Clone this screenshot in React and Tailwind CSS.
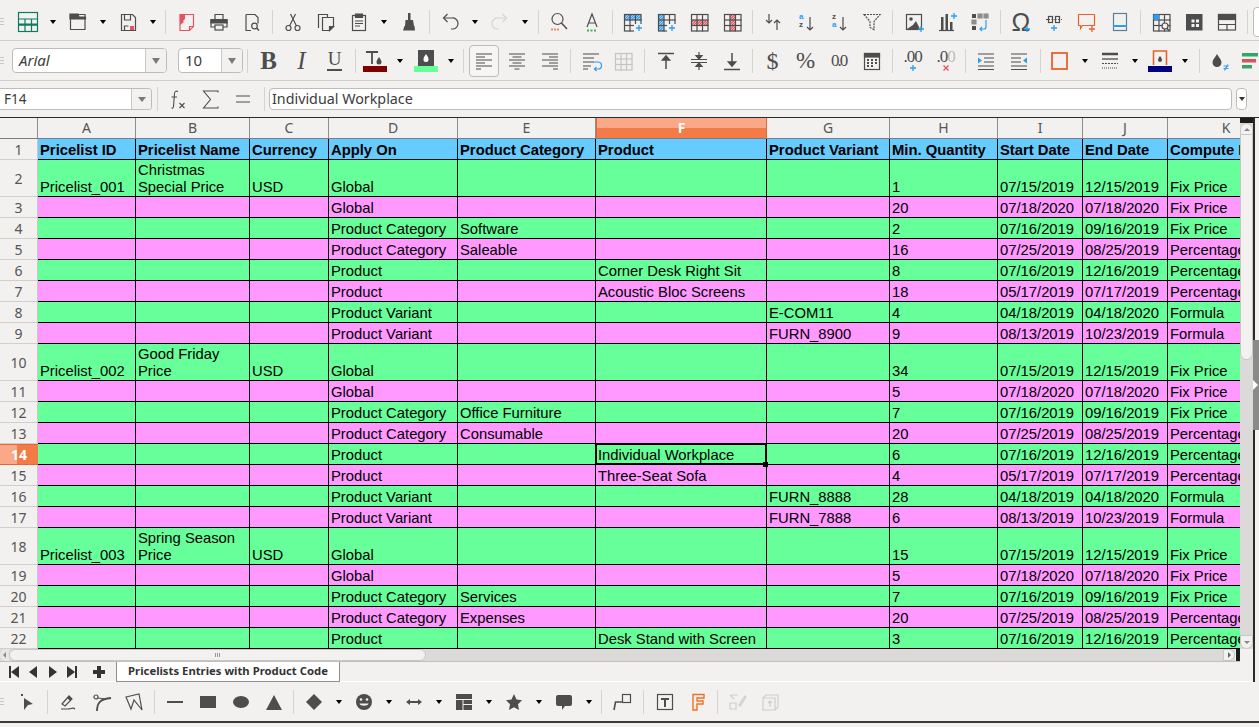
const D = '#4d4d4d';
const BLUE = '#2a9df4';
const RED = '#e2555f';
const ORANGE = '#e8622a';

const Ic = ({ children }) => (
  <svg width="22" height="22" viewBox="0 0 22 22" fill="none" stroke={D} strokeWidth="1.2">
    {children}
  </svg>
);

const I = ({ children, w = 'w-[33px]' }) => (
  <div className={`${w} h-[24px] flex items-center justify-center shrink-0`}>{children}</div>
);
const A = ({ cls = '' }) => (
  <div className={`w-[17px] flex items-center justify-center shrink-0 ${cls}`}>
    <div className="w-0 h-0 border-x-[3.5px] border-x-transparent border-t-[4px] border-t-black" />
  </div>
);
const S = ({ w = 'w-[8.3px]' }) => (
  <div className={`${w} h-[24px] flex justify-center shrink-0`}>
    <div className="w-px h-full bg-[#d4d3d0]" />
  </div>
);
const Grip = ({ w = 'w-[11px]' }) => (
  <div className={`${w} shrink-0 flex flex-col gap-[2px] pl-0`}>
    <div className="w-[4px] h-px bg-[#c8c7c4]" />
    <div className="w-[4px] h-px bg-[#c8c7c4]" />
    <div className="w-[4px] h-px bg-[#c8c7c4]" />
  </div>
);

const Grid = ({ x = 2, y = 3, n = 3, m = 3, s = 5.5, c = D }) => (
  <g stroke={c}>
    <rect x={x + 0.5} y={y + 0.5} width={n * s} height={m * s} />
    {Array.from({ length: n - 1 }, (_, i) => (
      <path key={i} d={`M${x + 0.5 + (i + 1) * s} ${y}v${m * s + 1}`} />
    ))}
    {Array.from({ length: m - 1 }, (_, i) => (
      <path key={i} d={`M${x} ${y + 0.5 + (i + 1) * s}h${n * s + 1}`} />
    ))}
  </g>
);
const Plus = ({ x = 17, y = 17, c = BLUE }) => (
  <path d={`M${x - 3} ${y}h6M${x} ${y - 3}v6`} stroke={c} strokeWidth="1.3" />
);
// hatched band used by the row and column icons
const Hatch = ({ x, y, w, h, c }) => {
  const lines = [];
  for (let i = 0; i < w + h; i += 2.5) {
    lines.push(`M${x + Math.min(i, w)} ${y + Math.max(0, i - w)}L${x + Math.max(0, i - h)} ${y + Math.min(i, h)}`);
  }
  return (
    <g>
      <rect x={x} y={y} width={w} height={h} fill="#fff" stroke="none" />
      <path d={lines.join('')} stroke={c} strokeWidth="1.2" />
    </g>
  );
};

const icons = {
  table: (
    <Ic>
      <g stroke="#0e7a5f">
        <rect x="1.5" y="1.5" width="19" height="19" />
        <path d="M1 8h20M1 14h20M8 8v13M14.500 8v13" />
        <path d="M1 13.500h20" strokeWidth="2" />
      </g>
    </Ic>
  ),
  open: (
    <Ic>
      <path d="M3.500 3.500h14.500v15h-14.500z" />
      <path d="M3 3h8l1 3h6.500v2h-15.500z" fill={D} />
    </Ic>
  ),
  save: (
    <Ic>
      <path d="M4.500 3.500h11l3 3v13h-14z" />
      <path d="M7.500 4v5h6v-5M7.500 19v-4h4" />
      <rect x="13" y="15" width="4" height="4" fill={RED} stroke="none" />
    </Ic>
  ),
  pdf: (
    <Ic>
      <path d="M5 3.500h13.500v12l-4 4h-9.500zM14.500 19.500v-4h4" stroke={RED} />
      <path d="M5 3h5v5l-2 2 1 1-4 3z" fill={RED} stroke="none" />
    </Ic>
  ),
  print: (
    <Ic>
      <path d="M7 8v-4.500h8v4.500M7 16h-4v-7.500h16v7.500h-4" />
      <path d="M3 9h16v3h-16z" fill={D} />
      <rect x="7" y="14" width="8" height="5" />
    </Ic>
  ),
  preview: (
    <Ic>
      <path d="M5 3.500h9l3 3v6M10 19.500h-5v-16" />
      <circle cx="13.500" cy="15" r="2.800" stroke={D} />
      <path d="M15.500 17l2.500 2.500" strokeWidth="1.600" />
    </Ic>
  ),
  cut: (
    <Ic>
      <circle cx="6.500" cy="17" r="2.500" />
      <circle cx="15.500" cy="17" r="2.500" />
      <path d="M7.500 15l6-12M14.500 15l-6-12" />
    </Ic>
  ),
  copy: (
    <Ic>
      <path d="M4 16.500h-.500v-13h9v2.500" />
      <path d="M7.500 6.500h11v9l-4 4h-7z" />
      <path d="M14.500 19.500v-4h4z" fill={D} />
    </Ic>
  ),
  paste: (
    <Ic>
      <rect x="4.500" y="4.500" width="13" height="15" />
      <path d="M7.500 3h7v3.500h-7z" fill={D} />
      <path d="M7 10h8M7 12.500h8M7 15h5" />
    </Ic>
  ),
  clone: (
    <Ic>
      <path d="M10 2h2.500v7h-2.500z" fill={D} stroke="none" />
      <path d="M7.500 9h7.500l1 6h-9z" fill={D} stroke="none" />
      <path d="M6.500 15h10l.5 4.500h-12z" fill={D} stroke="none" />
    </Ic>
  ),
  undo: (
    <Ic>
      <path d="M5 7h8a5.500 5.500 0 0 1 1 11h-2" />
      <path d="M8.500 3l-4 4 4 4" />
    </Ic>
  ),
  redo: (
    <Ic>
      <g stroke="#d5d4d1">
        <path d="M17 7h-8a5.500 5.500 0 0 0-1 11h2" />
        <path d="M13.500 3l4 4-4 4" />
      </g>
    </Ic>
  ),
  find: (
    <Ic>
      <circle cx="9.500" cy="8" r="5.500" />
      <path d="M13.500 12l5.500 6" strokeWidth="1.500" />
      <path d="M3 18.500h8" stroke="#ec8a66" strokeWidth="2" strokeDasharray="2 1" />
    </Ic>
  ),
  spell: (
    <Ic>
      <path d="M6 16l5-13 5 13M7.500 12h7" />
      <path d="M6 19.500h10" stroke="#3fb45c" strokeWidth="2" strokeDasharray="2 1.500" />
    </Ic>
  ),
  row: (
    <Ic>
      <Hatch x={2.5} y={3.5} w={16.5} h={5.5} c={BLUE} />
      <Grid x={2} y={3} n={3} m={3} />
      <rect x="12" y="13" width="10" height="9" fill="#f2f1f0" stroke="none" />
      <Plus />
    </Ic>
  ),
  col: (
    <Ic>
      <Hatch x={3.5} y={3.5} w={5.5} h={16.5} c={BLUE} />
      <Grid x={3} y={3} n={3} m={3} />
      <rect x="12" y="13" width="10" height="9" fill="#f2f1f0" stroke="none" />
      <Plus />
    </Ic>
  ),
  delRow: (
    <Ic>
      <Hatch x={3.5} y={9} w={16.5} h={5.5} c={RED} />
      <Grid x={3} y={3} n={3} m={3} />
    </Ic>
  ),
  delCol: (
    <Ic>
      <Hatch x={9} y={3.5} w={5.5} h={16.5} c={RED} />
      <Grid x={3} y={3} n={3} m={3} />
    </Ic>
  ),
  sort: (
    <Ic>
      <path d="M7 3v9M4 9l3 3 3-3M15 19v-10M12 12l3-3 3 3" />
    </Ic>
  ),
  sortAz: (
    <Ic>
      <text x="4" y="8" fontSize="8" fontFamily="Liberation Sans" fontWeight="700" fill={BLUE} stroke="none">a</text>
      <text x="4" y="16" fontSize="8" fontFamily="Liberation Sans" fontWeight="700" fill={D} stroke="none">z</text>
      <path d="M15 6v13M12 16l3 3 3-3" />
    </Ic>
  ),
  sortZa: (
    <Ic>
      <text x="4" y="8" fontSize="8" fontFamily="Liberation Sans" fontWeight="700" fill={D} stroke="none">z</text>
      <text x="4" y="16" fontSize="8" fontFamily="Liberation Sans" fontWeight="700" fill={BLUE} stroke="none">a</text>
      <path d="M15 6v13M12 16l3 3 3-3" />
    </Ic>
  ),
  filter: (
    <Ic>
      <path d="M3 3.500h16l-6 7v8l-4-2v-6z" strokeDasharray="2 1" />
    </Ic>
  ),
  image: (
    <Ic>
      <rect x="3.500" y="3.500" width="15" height="15" />
      <circle cx="8" cy="8" r="1.800" fill={D} stroke="none" />
      <path d="M4 18l6-4 3-4 4 8z" fill={D} stroke="none" />
      <Plus x={18} y={18} />
    </Ic>
  ),
  chart: (
    <Ic>
      <path d="M3 19.500h15" />
      <path d="M5 6h2.500v13h-2.500zM9.500 3h2.500v16h-2.500zM14 11h2.500v8h-2.500z" fill={D} stroke="none" />
      <Plus x={18} y={5} />
    </Ic>
  ),
  pivot: (
    <Ic>
      <path d="M3 3h4v4h-4zM3 15h4v4h-4z" fill={D} stroke="none" />
      <path d="M9 3h4v4h-4zM15 3h4v4h-4zM3 9h4v4h-4z" stroke={D} fill={D} opacity=".6" />
      <path d="M17 9v7a2 2 0 0 1-2 2h-4M13 16l-2 2 2 2" stroke={BLUE} />
    </Ic>
  ),
  link: (
    <Ic>
      <path d="M3 8.500h4M15 8.500h4M8.500 8.500h5" strokeDasharray="2 1" />
      <rect x="5.500" y="5.500" width="4" height="6" />
      <rect x="12.500" y="5.500" width="4" height="6" />
      <Plus x={11} y={17} />
    </Ic>
  ),
  comment: (
    <Ic>
      <path d="M2.500 3.500h16v11h-12l-2 3v-3h-2z" stroke={ORANGE} />
      <Plus x={16} y={18} c={ORANGE} />
    </Ic>
  ),
  header: (
    <Ic>
      <rect x="4.500" y="2.500" width="13" height="17" stroke="#5f7e91" />
      <path d="M4 15h14" stroke={BLUE} strokeWidth="2" />
    </Ic>
  ),
  rangeFind: (
    <Ic>
      <Grid x={3} y={3} n={3} m={3} />
      <rect x="3.500" y="3.500" width="5.500" height="5.500" fill={BLUE} stroke="none" />
      <circle cx="15" cy="15" r="3" fill="#f2f1f0" />
      <path d="M17 17.500l2.500 2.500" strokeWidth="1.500" />
    </Ic>
  ),
  tableDark: (
    <Ic>
      <rect x="3" y="3" width="16.500" height="16.500" fill={D} stroke="none" />
      <path d="M8.500 8.500h3v3h-3zM13 8.500h3v3h-3zM8.500 13h3v3h-3zM13 13h3v3h-3z" fill="#f2f1f0" stroke="none" />
    </Ic>
  ),
  tableSplit: (
    <Ic>
      <rect x="2.500" y="3.500" width="17" height="15.500" />
      <rect x="2.500" y="3.500" width="17" height="5" fill={D} />
      <path d="M2 13.500h18M11 13.500v6" />
    </Ic>
  ),
  alignL: (
    <Ic>
      <path d="M3 4h16M3 7h9M3 10h16M3 13h9M3 16h16M3 19h5" />
    </Ic>
  ),
  alignC: (
    <Ic>
      <path d="M3 4h16M6.500 7h9M3 10h16M6.500 13h9M3 16h16M8.500 19h5" />
    </Ic>
  ),
  alignR: (
    <Ic>
      <path d="M3 4h16M10 7h9M3 10h16M10 13h9M3 16h16M14 19h5" />
    </Ic>
  ),
  wrap: (
    <Ic>
      <path d="M3 4h16M3 8h11M3 12h11M3 16h8M3 19h5" />
      <path d="M14 12h4a2 2 0 0 1 0 7h-3M16.500 17l-2 2 2 2" stroke={BLUE} />
    </Ic>
  ),
  merge: (
    <Ic>
      <Grid x={2} y={3} n={3} m={3} c="#c5c4c1" />
    </Ic>
  ),
  top: (
    <Ic>
      <path d="M3 3.500h16" strokeWidth="1.500" />
      <path d="M11 19v-12M7.500 10l3.500-4 3.500 4z" fill={D} strokeWidth="1.500" />
    </Ic>
  ),
  mid: (
    <Ic>
      <path d="M3 9.500h16M3 12.500h16" />
      <path d="M11 2v7M8 5.500l3 3.500 3-3.500zM11 20v-7M8 16.500l3-3.500 3 3.500z" fill={D} />
    </Ic>
  ),
  bottom: (
    <Ic>
      <path d="M3 19.500h16" strokeWidth="1.500" />
      <path d="M11 3v12M7.500 12l3.500 4 3.500-4z" fill={D} strokeWidth="1.500" />
    </Ic>
  ),
  cal: (
    <Ic>
      <rect x="3.500" y="3.500" width="15" height="16" />
      <rect x="3.500" y="3.500" width="15" height="3.500" fill={D} />
      <path d="M6 10h2M10 10h2M14 10h2M6 13h2M10 13h2M14 13h2M6 16h2M10 16h2" strokeWidth="1.800" />
    </Ic>
  ),
  indent: (
    <Ic>
      <path d="M3 4h16M9 8h10M9 12h10M3 16h16M3 19.500h16" />
      <path d="M3 7.500l4 3-4 3z" fill={BLUE} stroke="none" />
    </Ic>
  ),
  outdent: (
    <Ic>
      <path d="M3 4h16M3 8h10M3 12h10M3 16h16M3 19.500h16" />
      <path d="M19 7.500l-4 3 4 3z" fill={BLUE} stroke="none" />
    </Ic>
  ),
  border: (
    <Ic>
      <rect x="3" y="3" width="15" height="16" stroke={ORANGE} strokeWidth="1.800" />
    </Ic>
  ),
  borderStyle: (
    <Ic>
      <path d="M3 4h16" strokeWidth="2.500" />
      <path d="M3 9h16" strokeWidth="1.300" />
      <path d="M3 13.500h16" strokeDasharray="2 1" />
      <path d="M3 18h16" strokeDasharray="1 1" />
    </Ic>
  ),
  cond: (
    <Ic>
      <path d="M8 4c2 3.500 4.500 5.500 4.500 8.500a4.500 4.500 0 0 1-9 0c0-3 2.500-5 4.500-8.500z" fill={D} stroke="none" />
      <path d="M14.500 16h5M14.500 18.500h5M19 14.500l-3.500 6" stroke={BLUE} />
    </Ic>
  ),
};

const Omega = () => (
  <div className="relative w-[22px] h-[22px]">
    <span className="block text-center text-[25px] leading-[22px] text-[#4d4d4d] font-['Liberation_Sans',sans-serif]">Ω</span>
    <svg className="absolute left-[12px] top-[12px]" width="10" height="10" viewBox="0 0 10 10">
      <path d="M2 6h6M5 3v6" stroke={BLUE} strokeWidth="1.300" />
    </svg>
  </div>
);

const Big = ({ children, cls = '' }) => (
  <span className={`text-[#4d4d4d] font-['Liberation_Serif',serif] ${cls}`}>{children}</span>
);

const ColorBtn = ({ bar, letter }) => (
  <div className="w-[24px] flex flex-col items-center">
    {letter ? (
      <svg width="24" height="16" viewBox="0 0 24 16">
        <path d="M3 2h12M9 2v12" stroke={D} strokeWidth="1.800" />
        <path d="M16 7c1 2 2.500 3 2.500 5a2.500 2.500 0 0 1-5 0c0-2 1.500-3 2.500-5z" fill={D} />
      </svg>
    ) : (
      <svg width="24" height="16" viewBox="0 0 24 16">
        <rect x="4" y="0" width="16" height="16" fill={D} />
        <path d="M12 4c1 2 2.500 3 2.500 5.500a2.500 2.500 0 0 1-5 0c0-2.500 1.500-3.500 2.500-5.500z" fill="#fff" />
      </svg>
    )}
    <div className={`w-[24px] h-[6px] ${bar}`} />
  </div>
);

const Toolbar1 = () => (
  <div className="h-[41px] flex items-center border-b border-[#cfcecb] pt-[3px] overflow-hidden">
    <Grip />
    <I>{icons.table}</I><A />
    <I>{icons.open}</I><A />
    <I>{icons.save}</I><A />
    <S />
    <I>{icons.pdf}</I><I>{icons.print}</I><I>{icons.preview}</I>
    <S />
    <I>{icons.cut}</I><I>{icons.copy}</I><I>{icons.paste}</I><A />
    <I>{icons.clone}</I>
    <S />
    <I>{icons.undo}</I><A />
    <I>{icons.redo}</I><A />
    <S />
    <I>{icons.find}</I><I>{icons.spell}</I>
    <S />
    <I>{icons.row}</I><I>{icons.col}</I><I>{icons.delRow}</I><I>{icons.delCol}</I>
    <S />
    <I>{icons.sort}</I><I>{icons.sortAz}</I><I>{icons.sortZa}</I><I>{icons.filter}</I>
    <S />
    <I>{icons.image}</I><I>{icons.chart}</I><I>{icons.pivot}</I>
    <S />
    <I><Omega /></I><I>{icons.link}</I><I>{icons.comment}</I><I>{icons.header}</I>
    <S />
    <I>{icons.rangeFind}</I><I>{icons.tableDark}</I><I>{icons.tableSplit}</I>
    <S />
    <div className="w-[20px] h-[30px] shrink-0 ml-[1px] bg-white border border-[#bdbcb9] rounded-[4px]" />
  </div>
);

const Combo = ({ text, w, btn, italic }) => (
  <div className={`${w} h-[25px] shrink-0 flex bg-white border border-[#bdbcb9] rounded-[4px] overflow-hidden`}>
    <div className={`flex-1 pl-[6px] text-[15px] leading-[23px] text-[#3c3c3c] font-['Noto_Sans',sans-serif] ${italic ? 'italic' : ''}`}>{text}</div>
    <div className={`${btn} shrink-0 border-l border-[#c8c7c4] bg-[#f2f1f0] flex items-center justify-center`}>
      <div className="w-0 h-0 border-x-[4px] border-x-transparent border-t-[6px] border-t-[#7a7a7a]" />
    </div>
  </div>
);

const Toolbar2 = () => (
  <div className="h-[40px] flex items-center border-b border-[#cfcecb] overflow-hidden">
    <Grip w="w-[12px]" />
    <Combo text="Arial" w="w-[155px]" btn="w-[21px]" italic />
    <div className="w-[11px] shrink-0" />
    <Combo text="10" w="w-[65px]" btn="w-[21px]" />
    <S w="w-[9px]" />
    <I><Big cls="text-[25px] font-bold leading-none">B</Big></I>
    <I><Big cls="text-[25px] italic leading-none font-normal">I</Big></I>
    <I>
      <div className="flex flex-col items-center">
        <Big cls="text-[19px] leading-[18px] font-['Liberation_Sans',sans-serif]">U</Big>
        <div className="w-[15px] h-[2px] bg-[#4d4d4d] mt-[1px]" />
      </div>
    </I>
    <S w="w-[9px]" />
    <I w="w-[29px]"><ColorBtn bar="bg-[#800000]" letter /></I><A cls="ml-[2px]" />
    <div className="w-[3px] shrink-0" />
    <I w="w-[29px]"><ColorBtn bar="bg-[#66ff99]" /></I><A cls="ml-[2px]" />
    <S w="w-[9px]" />
    <div className="w-[30px] h-[32px] ml-[1px] shrink-0 flex items-center justify-center border border-[#bdbcb9] rounded-[4px] bg-[#f6f5f4]">{icons.alignL}</div>
    <div className="w-[1px] shrink-0" />
    <I>{icons.alignC}</I><I>{icons.alignR}</I>
    <S w="w-[8px]" />
    <I>{icons.wrap}</I><I>{icons.merge}</I>
    <S w="w-[9px]" />
    <I>{icons.top}</I><I>{icons.mid}</I><I>{icons.bottom}</I>
    <S w="w-[8px]" />
    <I><Big cls="text-[24px] leading-none font-['Liberation_Sans',sans-serif]">$</Big></I>
    <I><Big cls="text-[23px] leading-none font-['Liberation_Sans',sans-serif]">%</Big></I>
    <I><Big cls="text-[17px] tracking-[-2px] leading-none font-['Liberation_Sans',sans-serif]">0.0</Big></I>
    <I>{icons.cal}</I>
    <S w="w-[8px]" />
    <I>
      <div className="flex flex-col items-center">
        <Big cls="text-[17px] tracking-[-1px] leading-[15px] font-['Liberation_Sans',sans-serif]">.00</Big>
        <svg width="8" height="8" viewBox="0 0 8 8">
          <path d="M1 4h6M4 1v6" stroke={BLUE} strokeWidth="1.300" />
        </svg>
      </div>
    </I>
    <I>
      <div className="flex flex-col items-center">
        <Big cls="text-[17px] tracking-[-1px] leading-[15px] font-['Liberation_Sans',sans-serif]">.0<span className="text-[#bdbcb9]">0</span></Big>
        <svg width="8" height="8" viewBox="0 0 8 8">
          <path d="M1.500 1.500l5 5M6.500 1.500l-5 5" stroke={RED} strokeWidth="1.300" />
        </svg>
      </div>
    </I>
    <S w="w-[7px]" />
    <I>{icons.indent}</I><I>{icons.outdent}</I>
    <S w="w-[10px]" />
    <I w="w-[29px]">{icons.border}</I><A cls="ml-[2px]" />
    <div className="w-[2px] shrink-0" />
    <I w="w-[29px]">{icons.borderStyle}</I><A cls="ml-[2px]" />
    <div className="w-[2px] shrink-0" />
    <I w="w-[29px]">
      <div className="w-[24px] flex flex-col items-center">
        <svg width="24" height="16" viewBox="0 0 24 16">
          <path d="M5.500 15v-14h13v14" stroke={ORANGE} strokeWidth="1.600" fill="none" />
          <path d="M12 6c1 1.500 2 2.500 2 4a2 2 0 0 1-4 0c0-1.500 1-2.500 2-4z" fill={D} />
        </svg>
        <div className="w-[24px] h-[6px] bg-[#000080]" />
      </div>
    </I><A cls="ml-[2px]" />
    <S w="w-[12px]" />
    <I w="w-[30px]">{icons.cond}</I>
    <I w="w-[30px]">
      <svg width="22" height="22" viewBox="0 0 22 22">
        <rect x="3" y="3" width="16" height="3.500" fill="#2fa866" />
        <rect x="3" y="9" width="14" height="3.500" fill="#d9535f" />
        <rect x="3" y="15" width="10" height="3.500" fill="#2fa866" />
      </svg>
    </I>
  </div>
);

const FormulaBar = () => (
  <div className="h-[36px] flex items-center font-['Noto_Sans',sans-serif] overflow-hidden">
    <div className="w-[152px] h-[22px] shrink-0 flex bg-white border border-[#bdbcb9] border-l-0 rounded-r-[4px] overflow-hidden">
      <div className="flex-1 pl-[4px] text-[13.5px] leading-[21px] text-[#3c3c3c]">F14</div>
      <div className="w-[20px] shrink-0 border-l border-[#c8c7c4] bg-[#f2f1f0] flex items-center justify-center">
        <div className="w-0 h-0 border-x-[4px] border-x-transparent border-t-[5px] border-t-[#7a7a7a]" />
      </div>
    </div>
    <S w="w-[10px]" />
    <div className="w-[32px] shrink-0 flex items-center justify-center">
      <svg width="22" height="22" viewBox="0 0 22 22" fill="none" stroke={D} strokeWidth="1.100">
        <path d="M11 3.500c-2-.8-3.300-.2-3.500 2l-1 13c-.2 1.500-1 1.800-2 1.500M4.500 9h5.500" />
        <path d="M12.500 15l5 5M17.500 15l-5 5" />
      </svg>
    </div>
    <div className="w-[33px] shrink-0 flex items-center justify-center">
      <svg width="22" height="22" viewBox="0 0 22 22" fill="none" stroke={D} strokeWidth="1.100">
        <path d="M18 4.500v-1.500h-14.500l7 8.500-7 8.500h14.500v-1.500" />
      </svg>
    </div>
    <div className="w-[32px] shrink-0 flex items-center justify-center">
      <svg width="22" height="22" viewBox="0 0 22 22" fill="none" stroke={D} strokeWidth="1.200">
        <path d="M4 8h14M4 14h14" />
      </svg>
    </div>
    <S w="w-[10px]" />
    <div className="w-[963px] h-[22px] shrink-0 bg-white border border-[#bdbcb9] rounded-[4px] pl-[2px] text-[14.3px] leading-[20px] text-[#3c3c3c]">
      Individual Workplace
    </div>
    <div className="w-[11px] h-[22px] shrink-0 ml-[4px] bg-white border border-[#bdbcb9] rounded-[4px] flex items-center justify-center">
      <div className="w-0 h-0 border-x-[3px] border-x-transparent border-t-[4px] border-t-[#333]" />
    </div>
  </div>
);

const colClasses = ['w-[98px]', 'w-[114px]', 'w-[79px]', 'w-[129px]', 'w-[138px]', 'w-[171px]', 'w-[123px]', 'w-[108px]', 'w-[85px]', 'w-[85px]', 'w-[90px]'];
const letters = ['A', 'B', 'C', 'D', 'E', 'F', 'G', 'H', 'I', 'J', 'K'];

const rows = [
  { n: 1, head: true, c: ['Pricelist ID', 'Pricelist Name', 'Currency', 'Apply On', 'Product Category', 'Product', 'Product Variant', 'Min. Quantity', 'Start Date', 'End Date', 'Compute Price'] },
  { n: 2, tall: true, c: ['Pricelist_001', 'Christmas Special Price', 'USD', 'Global', '', '', '', '1', '07/15/2019', '12/15/2019', 'Fix Price'] },
  { n: 3, c: ['', '', '', 'Global', '', '', '', '20', '07/18/2020', '07/18/2020', 'Fix Price'] },
  { n: 4, c: ['', '', '', 'Product Category', 'Software', '', '', '2', '07/16/2019', '09/16/2019', 'Fix Price'] },
  { n: 5, c: ['', '', '', 'Product Category', 'Saleable', '', '', '16', '07/25/2019', '08/25/2019', 'Percentage'] },
  { n: 6, c: ['', '', '', 'Product', '', 'Corner Desk Right Sit', '', '8', '07/16/2019', '12/16/2019', 'Percentage'] },
  { n: 7, c: ['', '', '', 'Product', '', 'Acoustic Bloc Screens', '', '18', '05/17/2019', '07/17/2019', 'Percentage'] },
  { n: 8, c: ['', '', '', 'Product Variant', '', '', 'E-COM11', '4', '04/18/2019', '04/18/2020', 'Formula'] },
  { n: 9, c: ['', '', '', 'Product Variant', '', '', 'FURN_8900', '9', '08/13/2019', '10/23/2019', 'Formula'] },
  { n: 10, tall: true, c: ['Pricelist_002', 'Good Friday Price', 'USD', 'Global', '', '', '', '34', '07/15/2019', '12/15/2019', 'Fix Price'] },
  { n: 11, c: ['', '', '', 'Global', '', '', '', '5', '07/18/2020', '07/18/2020', 'Fix Price'] },
  { n: 12, c: ['', '', '', 'Product Category', 'Office Furniture', '', '', '7', '07/16/2019', '09/16/2019', 'Fix Price'] },
  { n: 13, c: ['', '', '', 'Product Category', 'Consumable', '', '', '20', '07/25/2019', '08/25/2019', 'Percentage'] },
  { n: 14, c: ['', '', '', 'Product', '', 'Individual Workplace', '', '6', '07/16/2019', '12/16/2019', 'Percentage'] },
  { n: 15, c: ['', '', '', 'Product', '', 'Three-Seat Sofa', '', '4', '05/17/2019', '07/17/2019', 'Percentage'] },
  { n: 16, c: ['', '', '', 'Product Variant', '', '', 'FURN_8888', '28', '04/18/2019', '04/18/2020', 'Formula'] },
  { n: 17, c: ['', '', '', 'Product Variant', '', '', 'FURN_7888', '6', '08/13/2019', '10/23/2019', 'Formula'] },
  { n: 18, tall: true, c: ['Pricelist_003', 'Spring Season Price', 'USD', 'Global', '', '', '', '15', '07/15/2019', '12/15/2019', 'Fix Price'] },
  { n: 19, c: ['', '', '', 'Global', '', '', '', '5', '07/18/2020', '07/18/2020', 'Fix Price'] },
  { n: 20, c: ['', '', '', 'Product Category', 'Services', '', '', '7', '07/16/2019', '09/16/2019', 'Fix Price'] },
  { n: 21, c: ['', '', '', 'Product Category', 'Expenses', '', '', '20', '07/25/2019', '08/25/2019', 'Percentage'] },
  { n: 22, c: ['', '', '', 'Product', '', 'Desk Stand with Screen', '', '3', '07/16/2019', '12/16/2019', 'Percentage'] },
];

function rowBg(r) {
  if (r.head) return 'bg-[#66ccff]';
  return r.n % 2 === 0 ? 'bg-[#66ff99]' : 'bg-[#ff99ff]';
}

const ColHeader = () => (
  <div className="flex h-[21px] border-b border-[#7d7c7a] bg-[#f2f1f0] font-['Noto_Sans',sans-serif] text-[14px] text-[#555]">
    <div className="w-[38px] shrink-0 border-r border-[#8f8e8c]" />
    {letters.map((l, i) =>
      l === 'F' ? (
        <div key={l} className={`${colClasses[i]} shrink-0 relative border-x border-[#e0683a] bg-[#f27b47] text-white font-bold text-center leading-[20px]`}>
          <div className="absolute inset-x-0 top-0 h-[10px] bg-[#f9a987]" />
          <span className="relative">{l}</span>
        </div>
      ) : (
        <div key={l} className={`${colClasses[i]} shrink-0 text-center leading-[20px] ${l === 'K' ? 'pl-[26px]' : 'border-r border-[#8f8e8c]'}`}>{l}</div>
      )
    )}
  </div>
);

const RowNum = ({ r }) => {
  const h = r.tall ? 'h-[37px]' : 'h-[21px]';
  if (r.n === 14) {
    return (
      <div className={`w-[38px] ${h} shrink-0 relative bg-[#f27b47] border-y border-[#e0683a] text-white font-bold text-center text-[14px] leading-[19px]`}>
        <div className="absolute inset-y-0 left-0 w-[17px] bg-[#f9a987]" />
        <span className="relative">{r.n}</span>
      </div>
    );
  }
  return (
    <div className={`w-[38px] ${h} shrink-0 flex items-center justify-center bg-[#f2f1f0] border-r border-[#c8c7c4] border-b border-b-[#d0cfcc] text-[14px] text-[#555]`}>
      {r.n}
    </div>
  );
};

const Row = ({ r }) => (
  <div className="flex">
    <RowNum r={r} />
    {r.c.map((t, i) => (
      <div
        key={i}
        className={`${colClasses[i]} ${r.tall ? 'h-[37px]' : 'h-[21px]'} shrink-0 ${rowBg(r)} relative border-r border-b border-black px-[2px] flex items-end overflow-hidden text-[14.8px] leading-[17px] text-black font-['Liberation_Sans',sans-serif] ${r.head ? 'font-bold' : ''}`}
      >
        <div className={r.tall && i === 1 ? 'whitespace-normal' : 'whitespace-nowrap'}>{t}</div>
      </div>
    ))}
  </div>
);

const Sheet = () => (
  <div className="relative w-[1240px] shrink-0 overflow-hidden">
    <ColHeader />
    {rows.map((r) => (
      <Row key={r.n} r={r} />
    ))}
    {/* selected cell cursor */}
    <div className="absolute left-[595px] top-[325px] w-[172px] h-[22px] border-2 border-black pointer-events-none" />
    <div className="absolute left-[763px] top-[344px] w-[5px] h-[5px] bg-black" />
  </div>
);

const VScroll = () => (
  <div className="w-[13px] shrink-0 bg-[#dcdad8] flex flex-col items-center">
    <div className="w-full h-[5px] bg-[#1c1c1c] shrink-0" />
    <div className="w-full h-[12px] bg-[#f2f1f0] rounded-t-full border border-[#c8c7c4] shrink-0 flex items-center justify-center">
      <div className="w-0 h-0 border-x-[3px] border-x-transparent border-b-[3px] border-b-[#888]" />
    </div>
    <div className="w-full flex-1 flex flex-col">
      <div className="w-full h-[225px] rounded-b-full border border-t-0 border-[#c8c7c4] bg-[#f2f1f0]" />
      <div className="flex-1" />
    </div>
    <div className="w-full h-[14px] bg-[#f2f1f0] rounded-b-full border border-[#c8c7c4] shrink-0 flex items-center justify-center">
      <div className="w-0 h-0 border-x-[3px] border-x-transparent border-t-[3px] border-t-[#888]" />
    </div>
  </div>
);

const HScroll = () => (
  <div className="h-[13px] w-[1240px] flex bg-[#dcdad8] border-b border-[#c0bfbc]">
    <div className="w-[9px] shrink-0 flex items-center justify-center bg-[#e8e7e5] rounded-l-full">
      <div className="w-0 h-0 border-y-[3px] border-y-transparent border-r-[3px] border-r-[#888]" />
    </div>
    <div className="w-[417px] shrink-0 bg-[#f2f1f0] rounded-full border border-[#c8c7c4] flex items-center justify-center gap-[1px]">
      <div className="w-px h-[4px] bg-[#999]" />
      <div className="w-px h-[4px] bg-[#999]" />
      <div className="w-px h-[4px] bg-[#999]" />
    </div>
    <div className="flex-1" />
    <div className="w-[12px] shrink-0 bg-[#f2f1f0] rounded-r-full border border-[#c8c7c4] flex items-center justify-center">
      <div className="w-0 h-0 border-y-[3px] border-y-transparent border-l-[3px] border-l-[#666]" />
    </div>
    <div className="w-[5px] shrink-0 bg-[#1c1c1c] border-l border-[#f2f1f0]" />
  </div>
);

const Nav = ({ first, last, dir }) => (
  <div className="w-[19.500px] flex items-center justify-center shrink-0">
    {first && <div className="w-[2px] h-[12px] bg-[#333]" />}
    {dir === 'l' ? (
      <div className="w-0 h-0 border-y-[6px] border-y-transparent border-r-[8px] border-r-[#333]" />
    ) : (
      <div className="w-0 h-0 border-y-[6px] border-y-transparent border-l-[8px] border-l-[#333]" />
    )}
    {last && <div className="w-[2px] h-[12px] bg-[#333]" />}
  </div>
);

const TabBar = () => (
  <div className="h-[20px] flex items-center bg-[#f2f1f0] border-b border-white">
    <div className="w-[4px] shrink-0" />
    <Nav first dir="l" />
    <Nav dir="l" />
    <Nav dir="r" />
    <Nav last dir="r" />
    <div className="w-[11px] shrink-0" />
    <svg width="12" height="12" viewBox="0 0 12 12" className="shrink-0">
      <path d="M4 0h4v4h4v4h-4v4h-4v-4h-4v-4h4z" fill="#333" />
    </svg>
    <div className="w-[11px] shrink-0" />
    <div className="w-[224px] h-[20px] shrink-0 bg-white border-x border-b border-[#8f8e8c] text-center text-[11.3px] font-bold leading-[18px] text-[#333] font-['Noto_Sans',sans-serif]">
      Pricelists Entries with Product Code
    </div>
  </div>
);

const D1 = ({ children }) => (
  <svg width="22" height="22" viewBox="0 0 22 22" fill={D} stroke="none">
    {children}
  </svg>
);

const DrawBar = () => (
  <div className="h-[41px] flex items-center bg-[#f2f1f0] border-b-2 border-[#3a3a3a] overflow-hidden">
    <Grip w="w-[10px]" />
    <I>
      <D1>
        <path d="M8 7l9 6-5 1-4 5z" />
        <rect x="5" y="3" width="2" height="2" />
      </D1>
    </I>
    <S w="w-[8px]" />
    <I>
      <Ic>
        <path d="M5 13l7-8 3 3-7 7z" />
        <path d="M11 6l3 3" strokeWidth="2.500" />
        <path d="M4 18h7c3 0 5-2 7 0" />
      </Ic>
    </I>
    <I>
      <Ic>
        <path d="M7 20c0-8 3-12 14-13" strokeWidth="1.800" />
        <circle cx="6" cy="6" r="2" />
        <path d="M8 7l8 1" />
      </Ic>
    </I>
    <I>
      <Ic>
        <path d="M3 6l13-3 3 16-8-10-3 9z" />
      </Ic>
    </I>
    <S w="w-[8px]" />
    <I><div className="w-[16px] h-[2px] bg-[#4d4d4d]" /></I>
    <I><div className="w-[16px] h-[12px] bg-[#4d4d4d]" /></I>
    <I><div className="w-[16px] h-[12px] rounded-[50%] bg-[#4d4d4d]" /></I>
    <I>
      <D1>
        <path d="M11 4l8 15h-16z" />
      </D1>
    </I>
    <S w="w-[7px]" />
    <I>
      <D1>
        <path d="M11 3l8 8-8 8-8-8z" />
      </D1>
    </I>
    <A />
    <I>
      <svg width="22" height="22" viewBox="0 0 22 22">
        <circle cx="11" cy="11" r="8" fill={D} />
        <circle cx="8" cy="8.500" r="1.300" fill="#f2f1f0" />
        <circle cx="14" cy="8.500" r="1.300" fill="#f2f1f0" />
        <path d="M6.500 12.500h9c-.5 3-8.500 3-9 0z" fill="#f2f1f0" />
      </svg>
    </I>
    <A />
    <I>
      <D1>
        <path d="M3 11l4-3v2h8v-2l4 3-4 3v-2h-8v2z" />
      </D1>
    </I>
    <A />
    <I>
      <D1>
        <rect x="3" y="3" width="16" height="5" />
        <rect x="3" y="9" width="6.500" height="10" />
        <rect x="10.500" y="9" width="8.500" height="4" />
        <rect x="10.500" y="14" width="8.500" height="5" />
      </D1>
    </I>
    <A />
    <I>
      <D1>
        <path d="M11 3l2.500 5.500 5.500.7-4 4 1 5.800-5-2.800-5 2.800 1-5.800-4-4 5.500-.7z" />
      </D1>
    </I>
    <A />
    <I>
      <D1>
        <path d="M5 4h12a2 2 0 0 1 2 2v7a2 2 0 0 1-2 2h-5l-3 4v-4h-4a2 2 0 0 1-2-2v-7a2 2 0 0 1 2-2z" />
      </D1>
    </I>
    <A />
    <S w="w-[9px]" />
    <I w="w-[32px]">
      <Ic>
        <rect x="11.500" y="3.500" width="8" height="8" />
        <path d="M3 19l1.500-8h7" strokeWidth="1.600" />
      </Ic>
    </I>
    <S w="w-[10px]" />
    <I>
      <Ic>
        <rect x="3.500" y="3.500" width="15" height="15" />
        <path d="M7 7h8v2h-3v7h-2v-7h-3z" fill={D} stroke="none" />
      </Ic>
    </I>
    <I>
      <svg width="22" height="22" viewBox="0 0 22 22" fill="none">
        <path d="M6 3.500h11v3.500h-7v3h6v3h-6v6h-4z" stroke="#f07020" strokeWidth="1.400" />
      </svg>
    </I>
    <S w="w-[6px]" />
    <I>
      <Ic>
        <g stroke="#cfcecb">
          <path d="M4 4h8M4 4l4 4M4 18h6v-6h-6zM13 14l6-9 1 1-6 9z" />
        </g>
      </Ic>
    </I>
    <I>
      <Ic>
        <g stroke="#cfcecb">
          <path d="M4 7h12v12h-12zM4 7l3-3h12v12l-3 3M11 16v-6M9 12l2-2 2 2" />
        </g>
      </Ic>
    </I>
  </div>
);

export default function App() {
  return (
    <div className="w-[1259px] h-[727px] bg-[#f2f1f0] flex flex-col overflow-hidden relative font-['Noto_Sans',sans-serif]">
      <Toolbar1 />
      <Toolbar2 />
      <FormulaBar />
      <div className="flex h-[565px] border-t border-[#2a2a2a]">
        <div className="w-[1253px] shrink-0 flex flex-col">
          <div className="flex h-[531px] shrink-0">
            <Sheet />
            <VScroll />
          </div>
          <HScroll />
          <TabBar />
        </div>
        <div className="w-[2px] shrink-0 bg-[#2a2a2a]" />
      </div>
      <div className="absolute left-[1253px] top-[340px] w-[6px] h-[90px] bg-[#8a8a88] flex items-center">
        <div className="w-0 h-0 border-y-[5px] border-y-transparent border-l-[5px] border-l-white" />
      </div>
      <DrawBar />
    </div>
  );
}
